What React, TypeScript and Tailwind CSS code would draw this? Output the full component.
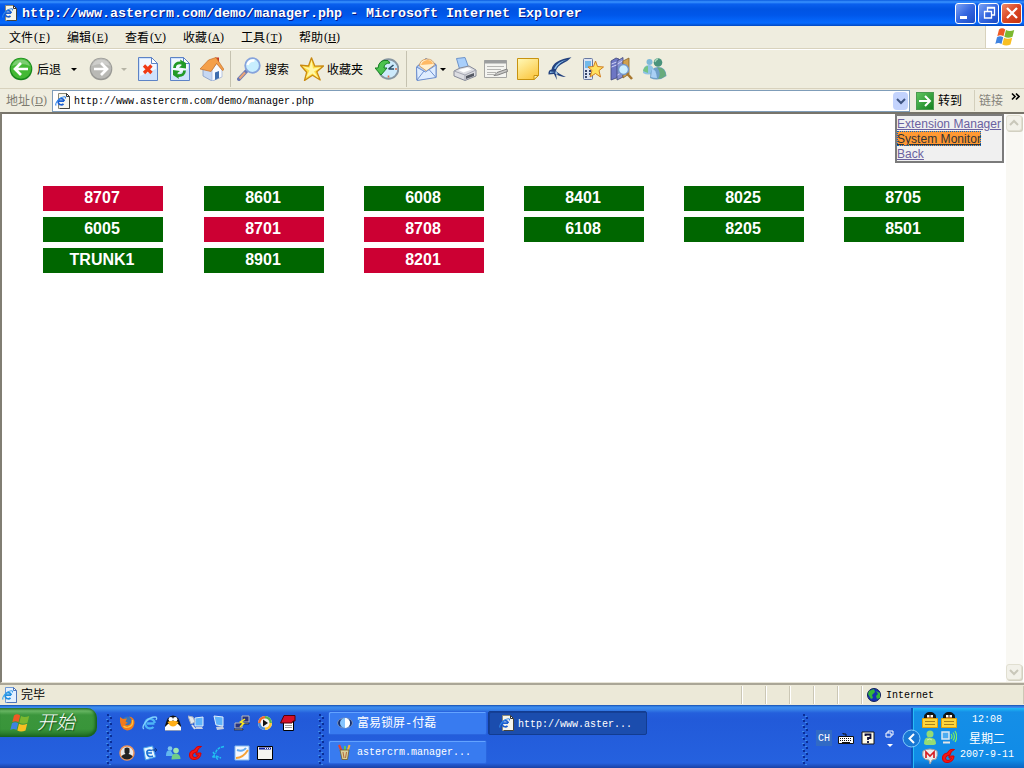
import React, { type ReactNode } from "react";

const mono = "font-['Liberation_Mono','Noto_Sans_CJK_SC',monospace]";

type IconProps = { className?: string; size?: number };

function Svg({ className = "", size = 24, box = 24, children }: IconProps & { box?: number; children: ReactNode }) {
  return (
    <svg className={`shrink-0 ${className}`} width={size} height={size} viewBox={`0 0 ${box} ${box}`} fill="none">
      {children}
    </svg>
  );
}

/* Internet Explorer document icon */
function IePage({ className = "", blue }: IconProps & { blue?: boolean }) {
  return (
    <Svg className={className} size={16} box={16}>
      <path d="M3.5.5h8l3 3v12h-11z" fill={blue ? "#e3f0ff" : "#f5f5ec"} stroke={blue ? "#6f9ad6" : "#8a8a78"} />
      <path d="M14.5 4v11.500H5" stroke={blue ? "#4c74ba" : "#44443c"} />
      <path d="M11.500.5v3h3z" fill="#fff" stroke={blue ? "#4c74ba" : "#333"} />
      <path d="M3.500 8.200h5.500M9.300 8.200a3.100 3.100 0 1 0-.8 2.600" stroke={blue ? "#2090e0" : "#1a5fd0"} strokeWidth="1.700" />
      <path d="M1.200 12.500C-.8 10.500 5 3.500 9.500 3.800q1.500.2.800 1.700" stroke={blue ? "#3ba4ee" : "#2f86ea"} strokeWidth="1.100" />
    </Svg>
  );
}

function IeLogo({ className = "", size = 16 }: IconProps) {
  return (
    <Svg className={className} size={size} box={16}>
      <path d="M12.500 8.500H5M12.800 8a4.800 4.800 0 1 0-1.300 4" stroke="#4db4f6" strokeWidth="2.300" />
      <path d="M2 14C-1.500 13 5 2 13 2c2 0 2 1.500 1 3" stroke="#83d2ff" strokeWidth="1.300" />
    </Svg>
  );
}

function WinFlag({ className = "", size = 20 }: IconProps) {
  return (
    <Svg className={className} size={size} box={20}>
      <path d="M4 2.500q3-2.500 6.200 0L8.500 9.200q-3-2-6.200 0z" fill="#ee5a24" />
      <path d="M11 3q3.500 2 8.200 0L17.500 9.800q-4.500 2-8.200 0z" fill="#7cb82f" />
      <path d="M2 10.200q3-2 6.200 0L6.500 17q-3-2-6.200 0z" fill="#3f83e0" />
      <path d="M9 10.800q3.500 2 8.200 0l-1.700 6.800q-4.500 2-8.200 0z" fill="#f8bf22" />
    </Svg>
  );
}

function ArrowDown({ className = "", color = "#000" }: { className?: string; color?: string }) {
  return (
    <svg className={`shrink-0 ${className}`} width="6" height="3" viewBox="0 0 6 3">
      <path d="M0 0h6L3 3z" fill={color} />
    </svg>
  );
}

function Round({ color, dark, flip, className = "" }: { color: string; dark: string; flip?: boolean; className?: string }) {
  return (
    <Svg className={className}>
      <circle cx="12" cy="12" r="11.300" fill={dark} />
      <circle cx="12" cy="11.500" r="10.300" fill={color} />
      <path d="M3 9a9.500 9.500 0 0 1 18 0q-9-4-18 0" fill="#fff" opacity=".3" />
      <path d={flip ? "M5 12h13M12 6l6 6-6 6" : "M19 12H6M12 6l-6 6 6 6"} stroke="#fff" strokeWidth="2.700" />
    </Svg>
  );
}

function Sheet({ children }: { children: ReactNode }) {
  return (
    <>
      <path d="M2.500.5h13l6 6v17h-19z" fill="#cfe2fc" stroke="#5d83c6" />
      <path d="M4 2h11v5h5v5L4 19z" fill="#f2f8ff" />
      <path d="M15.500.5v6h6z" fill="#fff" stroke="#5d83c6" />
      {children}
    </>
  );
}

function Sep({ className = "" }: { className?: string }) {
  return <div className={`h-9 w-px shrink-0 bg-[#c5c2b0] ${className}`} />;
}

function Label({ children, className = "" }: { children: ReactNode; className?: string }) {
  return (
    <span className={`shrink-0 whitespace-pre font-['Noto_Sans_CJK_SC',sans-serif] text-xs leading-4 ${className}`}>{children}</span>
  );
}

function Toolbar() {
  return (
    <div className="flex h-[39px] shrink-0 items-center border-t border-white bg-[#efedde]">
      <Round className="ml-[9px]" color="#43b934" dark="#16851b" />
      <Label className="ml-1 w-[24px]">后退</Label>
      <ArrowDown className="ml-[10px]" />
      <Round className="ml-[12px]" color="#b9b9b5" dark="#989894" flip />
      <ArrowDown className="ml-[8px]" color="#b6b4a5" />
      <Svg className="ml-[9px]">
        <Sheet>
          <path d="M8 8.500l7.500 7.500M15.500 8.500L8 16" stroke="#f03a14" strokeWidth="3.200" />
        </Sheet>
      </Svg>
      <Svg className="ml-2">
        <Sheet>
          <path d="M6.500 11q0-5.500 6.500-5M16.500 13.500q0 5.500-6.500 5" stroke="#229a27" strokeWidth="2.800" />
          <path d="M12 2.500l6 3.500v5.500l-7-1 2.500-2zM11 22l-6-4v-5l7 1-2.500 2z" fill="#229a27" />
        </Sheet>
      </Svg>
      <Svg className="ml-2">
        <path d="M15.500.5h3.500v8h-3.500z" fill="#c43b28" />
        <path d="M3 12l8-7 10 8v7l-9 4-9-5z" fill="#c6d8f2" stroke="#8299c4" strokeWidth=".8" />
        <path d="M12 13l5-7 5 7v7l-10 4z" fill="#f8fbff" stroke="#9fb2d8" strokeWidth=".7" />
        <path d="M0 12L8.500 3l7.500-2.500L24 12.500l-1.500 1-6-7-5.500 8z" fill="#f4a04a" stroke="#c66f25" strokeWidth=".7" />
        <path d="M15 15.500l4-1.500v7l-4 2z" fill="#3f6eae" />
      </Svg>
      <Sep className="ml-[6px]" />
      <Svg className="ml-[6px]">
        <path d="M9.500 14L2 22" stroke="#6b78b4" strokeWidth="4" strokeLinecap="round" />
        <path d="M8 15.500L2.500 21.500" stroke="#eaa477" strokeWidth="2.200" />
        <circle cx="15.500" cy="8.500" r="7.300" fill="#c8eefe" stroke="#86a3dc" strokeWidth="1.800" />
        <path d="M10.500 8q1.500-5 7-4.500" stroke="#fff" strokeWidth="2.400" />
      </Svg>
      <Label className="ml-1 w-[24px]">搜索</Label>
      <Svg className="ml-[11px]">
        <path d="M11.500.8l3.300 8.400 8.700-.2-6.700 5.800 3.400 8.200-7.700-4.800L4.500 23.500l2.200-8.300L.5 8.200l8 .8z" fill="#ffdf45" stroke="#c98a12" strokeWidth="1.300" strokeLinejoin="round" />
        <path d="M11.500 3l1.500 8.500 8-1.200-7 4.200 4.500 6.800-6-4.800-6.500 4 3.500-7L2.500 9.500l7 1.300z" fill="#fff7a8" />
      </Svg>
      <Label className="ml-[3px] w-[36px]">收藏夹</Label>
      <Svg className="ml-[12px]">
        <circle cx="13.500" cy="12" r="9.800" fill="#cdeafb" stroke="#8796a1" strokeWidth="1.900" />
        <path d="M13.500 12l5-4M13.500 12h5.500" stroke="#2d4e66" strokeWidth="1.600" />
        <path d="M13.500 4v2M13.500 18.500v2M20 12h2" stroke="#e06a48" strokeWidth="1.600" />
        <path d="M13 3.500Q4 2 3 11H0l6 7 6-7H9q0-5 6-5z" fill="#4cc34e" stroke="#167e23" />
      </Svg>
      <Sep className="ml-[7px]" />
      <Svg className="ml-[8px]">
        <path d="M1.500 10L11 1.500l10 6V20L2 23z" fill="#b3cdf3" stroke="#5676b9" />
        <path d="M4.500 9q0-6 7-7 7 0 8 6l-8 6z" fill="#fff0d0" stroke="#d8a468" />
        <path d="M6 8q1-4 6-5 5 0 6 4z" fill="#ffb964" />
        <path d="M1.500 10l9 5 10.500-7v12.500L2 23.500z" fill="#dfedff" stroke="#6f91cf" />
        <path d="M2 23l7-9M21 20.500l-7-8" stroke="#6f91cf" />
      </Svg>
      <ArrowDown className="ml-[1px]" />
      <Svg className="ml-[7px]">
        <path d="M3.500 1.500L12 .5l4 11-9 2z" fill="#a9cffb" stroke="#6d93c9" />
        <path d="M1 14l6-3 9-2 7 4v6l-11 4.500L1 19z" fill="#dcdde2" stroke="#858997" />
        <path d="M1 14l11 4 11-5M12 18v5" stroke="#a4a6b2" />
        <path d="M5.500 13l9-2.500 4 2-8 3z" fill="#fff" />
        <path d="M13 19l8-3v3l-8 3z" fill="#555963" />
      </Svg>
      <Svg className="ml-[7px]">
        <path d="M.5 3.500h22v17H.5z" fill="#f4f4f0" stroke="#a6a6a3" />
        <path d="M.5 3h22v3.500H.5z" fill="#9c9e9e" />
        <path d="M3 9.500h17M3 12.500h14M3 15.500h9M3 17.500h7" stroke="#b5b5b2" />
        <path d="M10 18.500l3-3 10-3.500.5 2.500-9.500 3.500z" fill="#c8c8c6" stroke="#777" strokeWidth=".9" />
      </Svg>
      <Svg className="ml-2">
        <defs>
          <linearGradient id="note" x1="0" y1="0" x2=".6" y2="1">
            <stop stopColor="#fff9b8" />
            <stop offset="1" stopColor="#fbca48" />
          </linearGradient>
        </defs>
        <path d="M1.500 1.500h21v17l-4.500 4H1.500z" fill="url(#note)" stroke="#c8930f" />
        <path d="M18 22.500v-4h4.500z" fill="#fff1ad" stroke="#c8930f" />
      </Svg>
      <Svg className="ml-2">
        <path d="M23.500.3Q20 4 15.500 6 9 9 8 14q3 3 10 6-7-.5-10-3l1 6-3-6-5.500.5Q0 13 3.500 12.500 5 3 23.500.3z" fill="#23427f" />
        <path d="M20 2.500Q11 5 7.500 12L6 11.500Q9 4.500 20 2.500zM2 14.500l5 .5-5 1z" fill="#8fc4ee" />
        <path d="M8 13.500l2 4-3-1z" fill="#a9cde9" />
      </Svg>
      <Svg className="ml-2">
        <rect x="3.500" y="1.500" width="9" height="21" rx="1" fill="#dce4f4" stroke="#6879a2" />
        <path d="M5 4h6v7H5z" fill="#72b9ea" />
        <path d="M5 13h2v2H5zM9 13h2v2H9zM5 16h2v2H5zM9 16h2v2H9zM5 19h2v2H5z" fill="#38466b" />
        <path d="M15.500 4l2 5.500 6 .5-4.500 3.500 1.500 6.500-5-3.500-5.500 3.500 2-6.500L8 10l5.500-.5z" fill="#ffe160" stroke="#d07e22" strokeLinejoin="round" />
      </Svg>
      <Svg className="ml-[5px]">
        <path d="M2 4l5-3 3 1v18l-8 3z" fill="#6d76c4" stroke="#404879" strokeWidth=".8" />
        <path d="M8 4l6-3.500V20l-6 3z" fill="#8890d4" stroke="#404879" strokeWidth=".8" />
        <path d="M2.500 7l5-2M2.500 10l5-2M8.500 7l5-3M8.500 18l5-3" stroke="#cfd3f5" />
        <path d="M14 4l6-3v16l-6 4z" fill="#d1a04e" stroke="#86642c" strokeWidth=".8" />
        <circle cx="14.500" cy="12.500" r="5" fill="#cbeeff" stroke="#7397c9" strokeWidth="1.400" />
        <path d="M18 16.500l5 5.500" stroke="#a8772e" strokeWidth="2.600" />
      </Svg>
      <Svg className="ml-[10px]">
        <path d="M0 16q0-8 6-8 5 0 5 8-6 3-11 0z" fill="#8fc3e6" />
        <path d="M0 14q1-5 5-5v7z" fill="#74c486" />
        <circle cx="6.500" cy="5" r="3" fill="#7eb8d8" />
        <path d="M7 21q0-11 8-11 8 0 8.500 9-8 6-16.500 2z" fill="#6e9fc8" />
        <path d="M14 10.500q8-1 9 8-3 3-8 3.500 4-6-1-11.500z" fill="#68ab7c" />
        <path d="M9 12q4 0 5 9-4 0-6-1z" fill="#a9d0f5" />
        <circle cx="15" cy="5.500" r="4.300" fill="#4a937c" />
        <path d="M12 5q1-3 3-3" stroke="#a5d6ba" strokeWidth="1.300" />
      </Svg>
    </div>
  );
}

function TitleBar() {
  return (
    <div className="flex h-[26px] shrink-0 items-center bg-[linear-gradient(to_bottom,#0a5be0_0,#3a93ff_2px,#0a60ee_4px,#0054e3_9px,#0057ea_15px,#066bff_23px,#0248c0_26px)] pr-[2px] text-white">
      <IePage className="ml-[2px]" />
      <span className="ml-1 mt-px whitespace-pre font-['Liberation_Mono',monospace] text-[13.33px] font-bold leading-5 [text-shadow:1px_1px_#0a1883]">
        http://www.astercrm.com/demo/manager.php - Microsoft Internet Explorer
      </span>
      <div className="ml-auto flex gap-[2px]">
        {["M4 14.500h7", "M8.500 8V4.500h7v7.500H13M5.500 8.500h7v6.500h-7zM5 8.500h8M8 5h8", "M5 5l10 10M15 5L5 15"].map((d, i) => (
          <div
            key={d}
            className={`flex size-[21px] items-center justify-center rounded-[3px] border border-white ${i === 2 ? "bg-[linear-gradient(135deg,#f08a68,#da4623_50%,#c53410)]" : "bg-[linear-gradient(135deg,#7da3f4,#3567e0_50%,#1b4cc5)]"}`}
          >
            <Svg size={20} box={20}>
              <path d={d} stroke="#fff" strokeWidth={i === 0 ? 3 : i === 1 ? 1.3 : 2.3} />
            </Svg>
          </div>
        ))}
      </div>
    </div>
  );
}

const menus = [
  ["文件", "F"],
  ["编辑", "E"],
  ["查看", "V"],
  ["收藏", "A"],
  ["工具", "T"],
  ["帮助", "H"],
];

function MenuKey({ children, className = "" }: { children: ReactNode; className?: string }) {
  return (
    <span className={`flex shrink-0 items-center font-['Liberation_Serif',serif] text-[12px] leading-4 ${className}`}>
      <span className="w-[5px] text-right">(</span>
      <u className="w-[8px] text-center text-[11px] leading-3 underline-offset-1">{children}</u>
      <span className="w-[4px]">)</span>
    </span>
  );
}

function MenuBar() {
  return (
    <div className="flex h-[23px] shrink-0 border-b border-[#d8d2bd] bg-[#efeddf]">
      <div className="flex items-center pl-[9px]">
        {menus.map(([name, key]) => (
          <div key={key} className="flex w-[58px] items-center">
            <Label>{name}</Label>
            <MenuKey>{key}</MenuKey>
          </div>
        ))}
      </div>
      <div className="ml-auto flex w-[39px] items-center justify-center border-l border-[#d8d2bd] bg-white">
        <WinFlag />
      </div>
    </div>
  );
}

function AddressBar() {
  return (
    <div className="flex h-[24px] shrink-0 items-center border-t border-[#d8d2bd] bg-[#efeddf]">
      <Label className="-mt-[2px] ml-[6px] text-[#7d7b70]">地址</Label>
      <MenuKey className="-mt-[2px] w-[22px] text-[#7d7b70]">D</MenuKey>
      <div className="flex h-[22px] w-[858px] shrink-0 items-center border border-[#7f9db9] bg-white">
        <IePage className="ml-[2px]" />
        <span className={`${mono} ml-[3px] mt-[3px] text-[10px] leading-4`}>http://www.astercrm.com/demo/manager.php</span>
        <div className="ml-auto mr-px flex h-[18px] w-[15px] items-center justify-center rounded-sm bg-[#c3d3fd]">
          <Svg size={10} box={10}>
            <path d="M1 3l4 4 4-4" stroke="#3e5482" strokeWidth="2" />
          </Svg>
        </div>
      </div>
      <div className="ml-[6px] flex size-[18px] shrink-0 items-center justify-center border border-[#4b9a50] bg-[linear-gradient(135deg,#5fc45e,#158222)]">
        <Svg size={16} box={16}>
          <path d="M2 8h11M8 3l5 5-5 5" stroke="#fff" strokeWidth="2" />
        </Svg>
      </div>
      <Label className="-mt-px ml-[4px] w-[36px]">转到</Label>
      <div className="h-[21px] w-px bg-[#d3cfbc]" />
      <Label className="-mt-px ml-[4px] text-[#85837a]">链接</Label>
      <Svg className="mb-2 ml-[8px]" size={9} box={9}>
        <path d="M1 1.500l3 3-3 3M5 1.500l3 3-3 3" stroke="#000" strokeWidth="1.600" />
      </Svg>
    </div>
  );
}

const busy = new Set(["8707", "8701", "8708", "8201"]);
const columns = [
  ["8707", "6005", "TRUNK1"],
  ["8601", "8701", "8901"],
  ["6008", "8708", "8201"],
  ["8401", "6108"],
  ["8025", "8205"],
  ["8705", "8501"],
];

function ScrollButton({ up }: { up?: boolean }) {
  return (
    <div className="flex size-4 items-center justify-center rounded-[3px] border border-[#e1dfd1] bg-[#f2f1e9] shadow-[1px_1px_#d2d0c1]">
      <Svg size={10} box={10}>
        <path d={up ? "M1 7l4-4 4 4" : "M1 3l4 4 4-4"} stroke="#c9c7ba" strokeWidth="2" />
      </Svg>
    </div>
  );
}

function Page() {
  return (
    <div className="relative flex h-[571px] shrink-0 border-b border-l-2 border-t-2 border-b-[#e7e4d7] border-l-[#817e73] border-t-[#77746a] bg-white">
      <div className="flex w-[1003px] gap-10 pl-[41px] pt-[72px]">
        {columns.map((col, i) => (
          <div key={col[0]} className={`flex w-[120px] shrink-0 flex-col gap-[6px] ${i === 0 ? "mr-px" : ""}`}>
            {col.map((ext) => (
              <div
                key={ext}
                className={`h-[25px] pr-[2px] text-center font-['Liberation_Sans',sans-serif] text-base font-bold leading-[23px] text-white ${busy.has(ext) ? "bg-[#cc0033]" : "bg-[#006600]"}`}
              >
                {ext}
              </div>
            ))}
          </div>
        ))}
      </div>
      <div className="ml-px flex w-[17px] flex-col justify-between bg-[#f9f8f3] pb-[2px] pt-px">
        <ScrollButton up />
        <ScrollButton />
      </div>
      <nav className="absolute left-[893px] top-0 flex h-[49px] w-[109px] flex-col items-start whitespace-nowrap border-2 border-[#7b7b7b] bg-[#f0f0f0] font-['Liberation_Sans',sans-serif] text-xs leading-[15px] tracking-[0.04px] text-[#6a61a0] underline">
        <a className="h-[15px] pt-px leading-[14px]">Extension Manager</a>
        <a className="h-[15px] bg-[#ff9933] pt-px leading-[14px] text-[#333] outline-1 -outline-offset-1 outline-dotted outline-[#0066cc]">System Monitor</a>
        <a className="h-[15px] pt-px leading-[14px]">Back</a>
      </nav>
    </div>
  );
}

function Globe({ className = "" }: IconProps) {
  return (
    <Svg className={className} size={14} box={14}>
      <circle cx="7" cy="7" r="6.500" fill="#1431b3" stroke="#101f58" />
      <path d="M2 3l5-2 1 3-3 3 1 3-2 1-3-5zM9 3l4 2v5l-3 1-1-3 2-2z" fill="#35b638" />
    </Svg>
  );
}

function StatusBar() {
  return (
    <div className="flex h-[22px] shrink-0 items-center border-t-2 border-[#aaa697] bg-[#ece9d8]">
      <IePage className="ml-[2px]" blue />
      <Label className="-mt-[2px] ml-[3px]">完毕</Label>
      <div className="ml-auto flex h-[18px] w-[283px] shrink-0">
        {[0, 1, 2, 3, 4].map((n) => (
          <div key={n} className="w-6 border-l border-[#cbc7b5] shadow-[inset_1px_0_#fff]" />
        ))}
        <div className="flex grow items-center border-l border-r border-[#cbc7b5] shadow-[inset_1px_0_#fff]">
          <Globe className="ml-[5px]" />
          <span className={`${mono} ml-[5px] text-[10px]`}>Internet</span>
        </div>
      </div>
    </div>
  );
}

function Grip({ className = "" }: { className?: string }) {
  return (
    <svg className={`shrink-0 ${className}`} width="6" height="51" viewBox="0 0 6 51">
      {Array.from({ length: 9 }, (_, i) => (
        <g key={i}>
          <path d={`M1 ${i * 6}h2v2H1zM4 ${i * 6 + 3}h2v2H4z`} fill="#0a2e96" />
          <path d={`M0 ${i * 6 - 1}h2v1H0zM3 ${i * 6 + 2}h2v1H3z`} fill="#3f8ce8" />
        </g>
      ))}
    </svg>
  );
}

function RedG() {
  return (
    <Svg size={16} box={16}>
      <path d="M13.500 1.500Q8 .5 6.500 5 1.500 5.500 1.500 10q0 5 5.500 4.500 6-1 6-6.500H8v2h2.500q-1 2.500-3.500 2.500-2.500 0-2.500-2.500Q4.500 7.500 9 7q.5-4 4.500-5.500z" fill="#f51515" stroke="#d80000" />
    </Svg>
  );
}

function Buddy({ color = "#76d785" }: { color?: string }) {
  return (
    <Svg size={16} box={16}>
      <circle cx="8" cy="4" r="3.500" fill={color} />
      <path d="M2 14q0-8 6-6 6-1 6 6l-2 1H4z" fill={color} />
      <path d="M5 10q3-2 5 0" stroke="#fff" opacity=".5" />
    </Svg>
  );
}

function PenguinIcon() {
  return (
    <Svg size={16} box={16}>
      <path d="M0 15.500V11Q2 .5 8 .5T16 11v4.500z" fill="#111" />
      <path d="M0 15.500V12l3-3h10l3 3v3.500z" fill="#fff" />
      <circle cx="5.800" cy="4.200" r="2.200" fill="#fff" />
      <circle cx="10.200" cy="4.200" r="2.200" fill="#fff" />
      <path d="M2.500 7Q8 4.500 13.500 7 11 11.500 8 11.500T2.500 7z" fill="#ffae16" />
    </Svg>
  );
}

function Computer({ second }: { second?: boolean }) {
  return (
    <Svg size={16} box={16}>
      <path d={second ? "M7 3l8-1v9H7z" : "M3 1l9 1v9l-7-1z"} fill="#5fb2fa" stroke="#e1eefb" />
      <path d={second ? "M8 12h6l1 2H7z" : "M5 12l7-1 1 3-7 1z"} fill="#c6cfdf" />
      {second && <path d="M0 1l5 1 2 5-4 2z" fill="#e4e7ea" stroke="#a8b1c0" />}
      {second && <path d="M4 10l3 4" stroke="#d8dde4" strokeWidth="2" />}
    </Svg>
  );
}

const topIcons: ReactNode[] = [
  <Svg size={16} box={16}>
    <circle cx="8.500" cy="7.500" r="6" fill="#3475be" />
    <path d="M1 2l3 2 4-.5-1.500 3L9 8l-3 1q3 3 6-1l.5-4L10 1.500q6 1 5.500 7Q14 15.500 8 15.500 0 14 1 2z" fill="#f07a1c" />
    <path d="M13.500 5q1 6-4 7-3 1-5-1" stroke="#ffc33b" strokeWidth="1.300" />
  </Svg>,
  <IeLogo />,
  <PenguinIcon />,
  <Computer second />,
  <Computer />,
  <Svg size={16} box={16}>
    <path d="M8 1h7v6H8zM1 8h7v5H1z" fill="#283480" stroke="#b9b9b9" />
    <path d="M7 8h8v1H7zM0 14h9v1H0z" fill="#bbb" stroke="#111" strokeWidth=".6" />
    <path d="M11 4L6.500 7l3 1.500L6 12" stroke="#ffec19" strokeWidth="1.500" />
  </Svg>,
  <Svg size={16} box={16}>
    <circle cx="8" cy="8" r="7" fill="#fff" />
    <path d="M8 2.500A5.500 5.500 0 0 1 13.500 8" stroke="#58b34b" strokeWidth="3" />
    <path d="M13.500 8A5.500 5.500 0 0 1 8 13.500" stroke="#ffc534" strokeWidth="3" />
    <path d="M8 13.500A5.500 5.500 0 0 1 2.500 8" stroke="#468cdd" strokeWidth="3" />
    <path d="M2.500 8A5.500 5.500 0 0 1 8 2.500" stroke="#f26a28" strokeWidth="3" />
    <circle cx="8" cy="8" r="4.500" fill="#f4f4f4" />
    <path d="M6 4.500l5 3.500-5 3.500z" fill="#111" />
  </Svg>,
  <Svg size={16} box={16}>
    <path d="M3.500 6h10v9.500h-10z" fill="#fff" stroke="#000" />
    <path d="M4 .5h11V6h-2l-1 2H.5z" fill="#d51028" stroke="#53000a" />
    <path d="M5 10.500h7M5 12.500h7" stroke="#999" />
  </Svg>,
];

const bottomIcons: ReactNode[] = [
  <Svg size={16} box={16}>
    <circle cx="8" cy="8" r="7" fill="#e8e8e8" stroke="#ef955b" strokeWidth="1.500" />
    <path d="M5.500 3.500q2.500-2 5 0v4l-1 1.500q4 1 4 3-5.500 5-11 0 0-2 4-3L5.500 7.500z" fill="#222" />
  </Svg>,
  <Svg size={16} box={16}>
    <path d="M1.500 3l9-2 3 11-10 3z" fill="#e8f7ff" stroke="#48a4ec" />
    <path d="M10 8H5.500M10 5.500Q4 4 5 8.500t6 2.500" stroke="#1a72d4" strokeWidth="1.700" />
    <path d="M10 5h5M13 3l2 2-2 2" stroke="#103b85" />
  </Svg>,
  <Svg size={16} box={16}>
    <circle cx="5" cy="3.500" r="2.300" fill="#7fc5ea" />
    <path d="M1 11q0-7 5-5l3 5z" fill="#61b7ef" />
    <circle cx="11" cy="5.500" r="2.800" fill="#9ee5ae" />
    <path d="M6.500 14.500q0-7 5-6 4 1 4 5.500z" fill="#70cd8a" />
  </Svg>,
  <RedG />,
  <Svg size={16} box={16}>
    <path d="M13 1.500Q5 3 4.500 9M2 7l2 3-3 2 4 0 2 3M5 11l5 2" stroke="#21c3f0" strokeWidth="1.400" strokeDasharray="3 .8" />
  </Svg>,
  <Svg size={16} box={16}>
    <path d="M1 1h14v14H1z" fill="#f4f8ff" stroke="#89bced" />
    <path d="M3 5Q9 7 12 3" stroke="#65acf0" strokeWidth="2" />
    <path d="M2 13Q9 13 14 5" stroke="#f6a336" strokeWidth="2" />
  </Svg>,
  <Svg size={16} box={16}>
    <path d="M.5 1.500h15v13H.5z" fill="#f5f5f0" stroke="#000" />
    <path d="M2 2.500h12v2H2z" fill="#0a1b9c" />
    <path d="M8 3.500h1M10 3.500h1M12 3.500h1" stroke="#fff" />
  </Svg>,
];

function TaskButton({ icon, text, active }: { icon: ReactNode; text: ReactNode; active?: boolean }) {
  return (
    <div
      className={`flex h-6 w-[159px] shrink-0 items-center rounded-[2px] border text-white ${active ? "border-[#123c91] bg-[#1b4dae] pl-[10px] shadow-[inset_1px_1px_#153f95]" : "border-[#2a65df] bg-[#387bf0] pl-[8px] shadow-[inset_1px_1px_#63a3ff]"}`}
    >
      {icon}
      {text}
    </div>
  );
}

function LockIcon() {
  return (
    <Svg size={16} box={16}>
      <path d="M2.500 7V4.500Q3 .5 8 .5t5.500 4V7" fill="#151515" stroke="#111" />
      <path d="M5 3h2.500v2.500H5zM8.500 3H11v2.500H8.500z" fill="#fff" />
      <path d="M5 5.500h6V7H5z" fill="#f4791b" />
      <path d="M.5 6.500h15v9H.5z" fill="#ffd63c" stroke="#e0a30e" />
      <path d="M3 9.500h10M3 12.500h10" stroke="#a8801c" />
    </Svg>
  );
}

function Taskbar() {
  return (
    <div className="flex h-[63px] shrink-0 bg-[linear-gradient(to_bottom,#164fae_0,#3b8cf0_2px,#3a86e9_4px,#245fdc_8px,#225ad9_14px,#2561df_58px,#1941a5_63px)]">
      <div className="mt-[3px] flex h-[29px] w-[97px] shrink-0 items-center rounded-r-[10px] bg-[linear-gradient(to_bottom,#2c752b,#66b562_3px,#3b963c_7px,#39953a_21px,#206d25)] shadow-[inset_-2px_-1px_3px_#175f1d]">
        <WinFlag className="ml-[10px]" />
        <span className="-mt-[3px] ml-[7px] font-['Noto_Sans_CJK_SC',sans-serif] text-[19px] font-light italic leading-6 text-white [text-shadow:1px_1px_1px_#174f1a]">开始</span>
      </div>
      <Grip className="ml-[9px] mt-[9px]" />
      <div className="ml-[7px] grid h-[63px] w-[184px] shrink-0 grid-cols-8 grid-rows-2 pt-[3px]">
        {[...topIcons, ...bottomIcons].map((icon, i) => (
          <div key={i} className="flex items-center justify-start">
            {icon}
          </div>
        ))}
      </div>
      <Grip className="ml-[15px] mt-[9px]" />
      <div className="ml-[4px] flex w-[470px] shrink-0 flex-wrap content-start gap-x-px gap-y-[5px] pt-[6px]">
        <TaskButton
          icon={
            <Svg size={16} box={16}>
              <ellipse cx="8" cy="8" rx="7.500" ry="5" fill="#17306e" stroke="#7893c0" />
              <circle cx="8" cy="8" r="5" fill="#84c4ff" />
              <path d="M8 3a5 5 0 0 1 0 10z" fill="#fff" />
            </Svg>
          }
          text={
            <Label className="ml-[4px]">
              富易锁屏<span className={mono}>-</span>付磊
            </Label>
          }
        />
        <TaskButton active icon={<IePage />} text={<span className={`${mono} ml-[3px] mt-[2px] text-[10px]`}>http://www.aster...</span>} />
        <TaskButton
          icon={
            <Svg size={16} box={16}>
              <path d="M5 8L2 1" stroke="#e9402d" strokeWidth="2.200" />
              <path d="M8 9V2" stroke="#54c960" strokeWidth="2" />
              <path d="M10 9l2.500-8" stroke="#f3b53d" strokeWidth="2" />
              <path d="M3 6h9l-1.500 9.500H5z" fill="#d9cf9a" stroke="#715e2a" strokeWidth=".8" />
              <path d="M6 8l1 6M9.500 8l-1 6" stroke="#b46a3a" />
            </Svg>
          }
          text={<span className={`${mono} ml-[4px] mt-px text-[10px]`}>astercrm.manager...</span>}
        />
      </div>
      <Grip className="ml-[4px] mt-[9px]" />
      <div className="ml-[8px] flex h-[66px] w-[95px] shrink-0 items-center text-white">
        <span className={`${mono} flex h-4 w-4 items-center justify-center bg-[#316ac5] text-[10px]`}>CH</span>
        <Svg className="ml-[6px]" size={16} box={16}>
          <path d="M.5 6.500h15v7H.5z" fill="#fff" stroke="#111" />
          <path d="M2 8.500h12M2 10.500h12" stroke="#111" strokeDasharray="1 1" />
          <path d="M4 12.500h8M8 6V4H5V3" stroke="#111" />
        </Svg>
        <Svg className="ml-[7px]" size={14} box={14}>
          <path d="M1 1h12v12H1z" fill="#fffde9" stroke="#151515" />
          <path d="M4.500 5V3.500h5V7H7v2M7 10v2" stroke="#10113a" strokeWidth="1.800" />
        </Svg>
        <div className="ml-[10px] flex h-[17px] flex-col items-center justify-between">
          <Svg size={9} box={9}>
            <path d="M3 3V1h5v4H6M1 3h5v4H1z" stroke="#fff" />
          </Svg>
          <ArrowDown color="#fff" />
        </div>
      </div>
      <div className="relative mt-[3px] flex w-[113px] shrink-0 border-l-2 border-[#0c55bd] bg-[linear-gradient(to_bottom,#20bdf5_0,#158fe7_4px,#108be7_52px,#0c65c1_60px)] text-white shadow-[inset_1px_0_#27bff6]">
        <Svg className="absolute -left-[11px] top-[21px]" size={19} box={19}>
          <circle cx="9.500" cy="9.500" r="8.500" fill="#1978d4" stroke="#83cdfc" />
          <path d="M12 5L7.500 9.500 12 14" stroke="#fff" strokeWidth="2" />
        </Svg>
        <div className="ml-[9px] mt-[4px] grid h-[54px] w-[36px] shrink-0 grid-cols-2 grid-rows-3 gap-x-[2px]">
          <LockIcon />
          <LockIcon />
          <Buddy color="#94dc74" />
          <Svg size={16} box={16}>
            <path d="M1 2h7v7H1z" fill="#4dabf0" stroke="#dce7f1" strokeWidth="1.500" />
            <path d="M2 12.500h7" stroke="#e5e5e5" strokeWidth="2" />
            <path d="M10 4q2 2.500 0 5M12 2.500q3 4 0 8M14 1q3.500 5.500 0 11" stroke="#7df262" strokeWidth="1.200" />
          </Svg>
          <Svg size={16} box={16}>
            <path d="M1 3q7-4 14 0 1 5-1 8l-4 1-2 4-1-4q-8 0-6-9z" fill="#eee" stroke="#a5a1a1" />
            <path d="M4 10V4l4 4 4-4v6" stroke="#d81e23" strokeWidth="1.700" />
          </Svg>
          <RedG />
        </div>
        <div className={`${mono} flex h-[57px] w-[58px] shrink-0 flex-col items-center pt-[3px] text-[10px] leading-[18px]`}>
          <span>12:08</span>
          <Label className="leading-[17px]">星期二</Label>
          <span>2007-9-11</span>
        </div>
      </div>
    </div>
  );
}

export default function App() {
  return (
    <div className="flex h-[768px] w-[1024px] flex-col overflow-hidden bg-[#ece9d8] text-black">
      <TitleBar />
      <MenuBar />
      <Toolbar />
      <AddressBar />
      <Page />
      <StatusBar />
      <Taskbar />
    </div>
  );
}
